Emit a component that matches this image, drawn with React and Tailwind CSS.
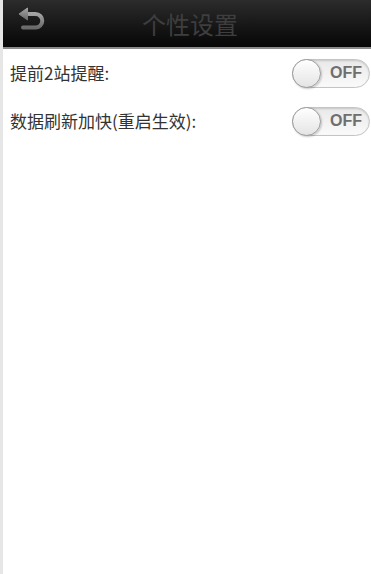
import React from 'react';

function Toggle() {
  return (
    <div className="relative w-[78px] h-[29px] rounded-full border border-[#c4c4c4] bg-gradient-to-b from-[#e9e9e9] to-[#fafafa] shadow-[inset_0_1px_2px_rgba(0,0,0,0.15)] flex items-center">
      <div className="absolute -left-px -top-px w-[29px] h-[29px] rounded-full border border-[#9a9a9a] bg-gradient-to-b from-[#ffffff] to-[#e4e4e4] shadow-[1px_1px_2px_rgba(0,0,0,0.2)]"></div>
      <span className="ml-[37px] text-[16px] font-bold text-[#6f6f6f] leading-none font-['Liberation_Sans',Arial,sans-serif]">OFF</span>
    </div>
  );
}

function Row({ label }) {
  return (
    <div className="h-12 flex items-center justify-between pl-[7px] pr-0">
      <span className="text-[17px] text-[#333] font-['Noto_Sans_CJK_SC','Liberation_Sans',sans-serif]">{label}</span>
      <div className="mr-[1px]">
        <Toggle />
      </div>
    </div>
  );
}

export default function App() {
  return (
    <div className="w-[371px] h-[574px] flex bg-[#e6e6e6] font-['Liberation_Sans','Noto_Sans_CJK_SC',sans-serif]">
      <div className="ml-[3px] flex-1 flex flex-col bg-white">
        {/* Title bar */}
        <div className="h-[49px] bg-gradient-to-b from-[#2c2c2c] to-[#070707] border-b-2 border-[#8a8a8a] flex items-center relative">
          <svg className="absolute left-[15px] top-[7px]" width="27" height="23" viewBox="0 0 27 23">
            <defs>
              <linearGradient id="bk" x1="0" y1="0" x2="0" y2="1">
                <stop offset="0" stopColor="#a4a4a4" />
                <stop offset="1" stopColor="#6a6a6a" />
              </linearGradient>
            </defs>
            <path d="M8 7 H17.5 a6.8 6.8 0 0 1 0 13.6 H5" fill="none" stroke="url(#bk)" strokeWidth="4" strokeLinecap="round" />
            <path d="M1 7 L9.5 1 L9.5 13 Z" fill="url(#bk)" strokeLinejoin="round" stroke="url(#bk)" strokeWidth="1" />
          </svg>
          <span className="ml-[139px] text-[24px] text-[#3e3e3e] font-['Noto_Sans_CJK_SC',sans-serif] leading-none">个性设置</span>
        </div>
        <Row label="提前2站提醒:" />
        <Row label="数据刷新加快(重启生效):" />
      </div>
    </div>
  );
}
